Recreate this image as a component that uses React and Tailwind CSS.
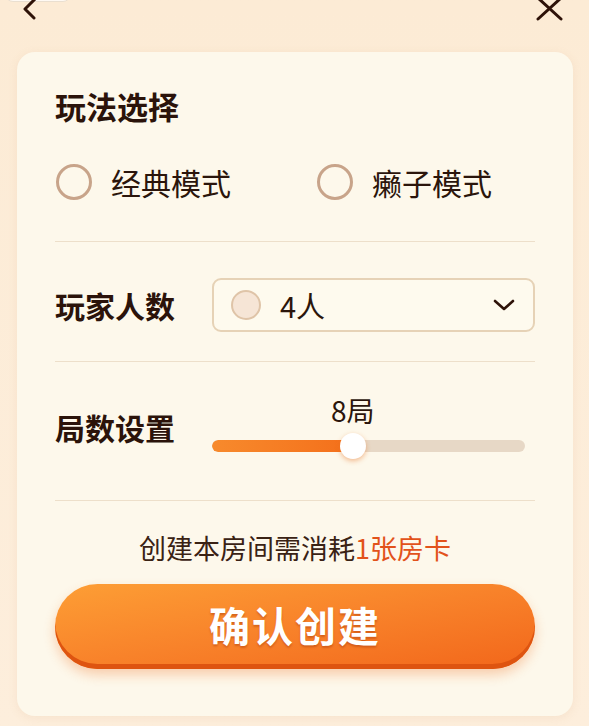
import React from 'react'

const FONT = { fontFamily: '"Noto Sans CJK SC", "Noto Sans", sans-serif' }

function Radio({ label }) {
  return (
    <div className="flex items-center gap-[19px]">
      <span className="block h-[36px] w-[36px] rounded-full border-[3px] border-[#c8a48a]" />
      <span className="text-[30px] leading-[40px] text-[#2b150b]">{label}</span>
    </div>
  )
}

export default function App() {
  const rounds = 45 // slider position, percent

  return (
    <div
      className="relative min-h-[726px] w-full overflow-hidden bg-gradient-to-b from-[#fcebd5] to-[#fdeedc]"
      style={FONT}
    >
      {/* top bar */}
      <div className="relative h-[52px]">
        <div className="absolute left-[5px] top-[-30px] h-[32px] w-[66px] rounded-lg border border-[#eadfd0] bg-white/70" />
        <svg className="absolute left-[20px] top-[-4px]" width="22" height="26" viewBox="0 0 22 26" fill="none">
          <path d="M17 1 L5 13 L14 22" stroke="#2e1208" strokeWidth="3" strokeLinecap="round" strokeLinejoin="round" />
        </svg>
        <svg className="absolute left-[535px] top-[-4px]" width="30" height="26" viewBox="0 0 30 26" fill="none">
          <path d="M3 2 L26 23 M26 2 L3 23" stroke="#2e1208" strokeWidth="3" strokeLinecap="round" />
        </svg>
      </div>

      {/* card */}
      <div className="ml-[17px] mr-[16px] rounded-[18px] bg-[#fdf8eb] px-[38px] pb-[47px] pt-[36px] shadow-[0_2px_10px_rgba(200,150,100,0.12)]">
        <div className="text-[31px] font-bold leading-[36px] text-[#2b130a]">玩法选择</div>

        <div className="mt-[38px] flex h-[40px] items-center">
          <div className="w-[262px] pl-[1px]">
            <Radio label="经典模式" />
          </div>
          <Radio label="癞子模式" />
        </div>

        <div className="mt-[39px] h-px bg-[#eddfca]" />

        <div className="mt-[36px] flex items-center">
          <div className="w-[157px] text-[30px] font-bold leading-[40px] text-[#2b130a]">玩家人数</div>
          <div className="flex h-[54px] flex-1 items-center rounded-[9px] border-2 border-[#e6d2b6] bg-[#fefaee] pl-[17px] pr-[18px]">
            <span className="block h-[30px] w-[30px] rounded-full border-2 border-[#dfc4a8] bg-[#f6e5d6]" />
            <span className="ml-[19px] flex-1 text-[29px] leading-[40px] text-[#2b150b]">4人</span>
            <svg width="22" height="14" viewBox="0 0 22 14" fill="none">
              <path d="M2 3 L11 11 L20 3" stroke="#2e1208" strokeWidth="2.6" strokeLinecap="round" strokeLinejoin="round" />
            </svg>
          </div>
        </div>

        <div className="mt-[29px] h-px bg-[#eddfca]" />

        <div className="mt-[33px] flex items-center">
          <div className="w-[157px] text-[30px] font-bold leading-[40px] text-[#2b130a]">局数设置</div>
          <div className="flex w-[313px] flex-col">
            <div className="relative h-[30px] text-[28px] leading-[30px] text-[#2b150b]">
              <span className="absolute -translate-x-1/2" style={{ left: `${rounds}%` }}>8局</span>
            </div>
            <div className="relative mt-[8px] flex h-[26px] items-center">
              <div className="h-[12px] w-full overflow-hidden rounded-full bg-[#e7d8c6]">
                <div
                  className="h-full rounded-full bg-gradient-to-r from-[#f78a2c] to-[#f46f1a]"
                  style={{ width: `${rounds}%` }}
                />
              </div>
              <div
                className="absolute top-0 h-[26px] w-[26px] -translate-x-1/2 rounded-full bg-white shadow-[0_2px_5px_rgba(230,110,30,0.45)]"
                style={{ left: `${rounds}%` }}
              />
            </div>
          </div>
        </div>

        <div className="mt-[41px] h-px bg-[#eddfca]" />

        <div className="mt-[31px] text-center text-[27px] leading-[32px] text-[#3a2214]">
          创建本房间需消耗<span className="text-[#e2521a]">1张房卡</span>
        </div>

        <button className="mt-[20px] flex h-[85px] w-full items-center justify-center rounded-full bg-gradient-to-br from-[#fd9e35] via-[#f8822a] to-[#f2661a] pb-[4px] text-[41px] font-bold tracking-[2px] text-white shadow-[inset_0_-5px_0_#de5410,0_6px_12px_rgba(240,110,30,0.3)] [text-shadow:0_2px_2px_rgba(170,60,10,0.45)]">
          确认创建
        </button>
      </div>
    </div>
  )
}
